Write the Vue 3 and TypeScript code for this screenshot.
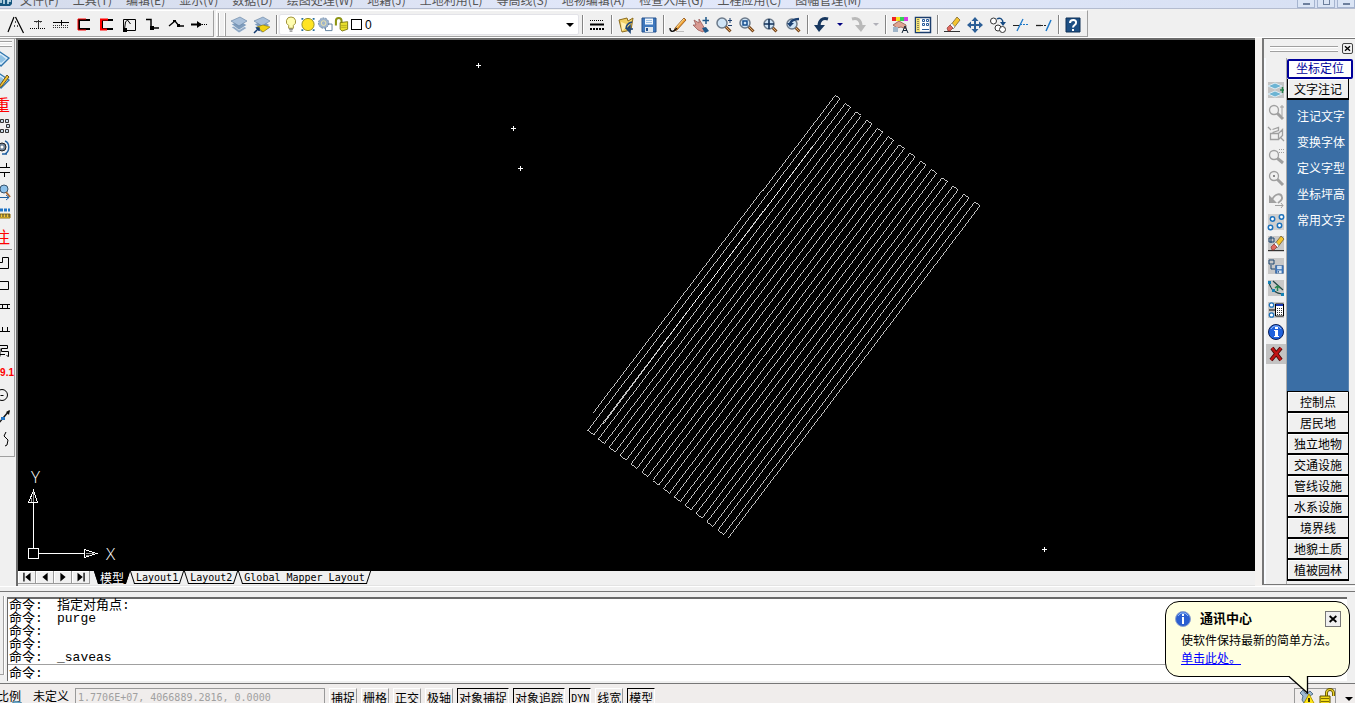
<script setup lang="ts">
interface Tool { id: string; label: string }

const menus: string[] = ['文件(F)', '工具(T)', '编辑(E)', '显示(V)', '数据(D)', '绘图处理(W)', '地籍(J)', '土地利用(L)', '等高线(S)', '地物编辑(A)', '检查入库(G)', '工程应用(C)', '图幅管理(M)']

const lens = (x: number, y: number) =>
  `<path d="M${x + 3} ${y + 3}L14.5 14.5" stroke="#7a4a20" stroke-width="3"/><path d="M${x + 3} ${y + 3}L14 14" stroke="#e0a868" stroke-width="1"/><circle cx="${x}" cy="${y}" r="5" fill="#cfe4f6" stroke="#6c7a8a" stroke-width="1.5"/>`
const grayLens = (x: number, y: number) =>
  `<path d="M${x + 3} ${y + 3}L15 15" stroke="#a0a0a0" stroke-width="3"/><circle cx="${x}" cy="${y}" r="4.5" fill="#f0f0f0" stroke="#a0a0a0" stroke-width="1.3"/>`
const sheets = `<path d="M0 10l9-3 7 4-8 5z" fill="#8fa8c4" stroke="#fff" stroke-width=".6"/><path d="M0 7l9-3 7 4-8 5z" fill="#7f9dbd" stroke="#fff" stroke-width=".6"/><path d="M0 4l9-4 7 4-8 5z" fill="#a9c0da" stroke="#5f7d9f" stroke-width=".6"/>`
const disk = `<path d="M1 1h14v14H1z" fill="#3f78bd" stroke="#24508c"/><path d="M4 1.500h8v6H4z" fill="#eef5fc"/><path d="M5 3.500h6M5 5.500h6" stroke="#9cc0e4"/><path d="M4 10h8v5H4z" fill="#dfe8f0"/><path d="M5 11h2v3H5z" fill="#24508c"/>`
const eraser = `<path d="M0 14.500h16" stroke="#333"/><path d="M6 9l7-9 3 3-7 9z" fill="#f4c430" stroke="#6a5320" stroke-width=".7"/><path d="M6 8l3 4 2-2-3-4z" fill="#f4f8fc" stroke="#567" stroke-width=".5"/><path d="M3 11l3-3 3 3-3 3H4z" fill="#e06a60" stroke="#7c2a25" stroke-width=".6"/>`
const pencil = `<path d="M5 11l9-10 2 2-9 10-3 1z" fill="#f0a030" stroke="#8a4a10" stroke-width=".8"/><path d="M6 11l8-9" stroke="#fff0b0" stroke-width=".8"/>`
const page = `<path d="M-2 6l8-6 9 6-8 8z" fill="#d9ecfa" stroke="#2f75ad" stroke-width="1.300"/><path d="M2 6l5-3 5 4-5 4z" fill="#8fc1e4"/>`

const icons: Record<string, string> = {
  angle: '<path d="M7 0L1 15M8.500 0l8 16" stroke="#000" stroke-width="1.200"/><path d="M8.500 4v2M7.500 8v2M10.500 8v2" stroke="#555"/>',
  liftLine: '<path d="M4 4.500h8M8.500 3v8M6.500 5.500l2-2 2 2" stroke="#333"/><path d="M0 11.500h16" stroke="#000" stroke-dasharray="1 1"/>',
  dotLine: '<path d="M0 5.500h16M8.500 3v5" stroke="#000"/><path d="M0 8.500h16M0 10.500h16" stroke="#333" stroke-dasharray="1 1"/>',
  redC: '<path d="M14 3H3v9h11" stroke="#000" stroke-width="2"/><path d="M10 2H2v11h8" stroke="#f00"/>',
  redC2: '<path d="M14 3H3v9h11" stroke="#000" stroke-width="2"/><path d="M9 2.500H2v10h6" stroke="#f00" stroke-width="2"/>',
  box: '<path d="M1.500 2.500h12v11h-12z" stroke="#000"/><path d="M2.500 12l1-7 2-2 3 4" stroke="#000"/><path d="M1 11h4v4H1z" fill="#000"/>',
  step: '<path d="M1 2.500h5v8.500h8" stroke="#000" stroke-width="1.500"/><path d="M5 9h4v4H5z" fill="#000"/>',
  poly: '<path d="M1 9l6-5 4 5h5" stroke="#000" stroke-width="1.300"/><path d="M5 3h3v2H5zM9 7h3v3H9z" fill="#000"/>',
  arrowLine: '<path d="M0 7.500h10" stroke="#000" stroke-width="2"/><path d="M9 7.500h7" stroke="#000" stroke-dasharray="1 1"/><path d="M6 4l5 3.500L6 11z" fill="#000"/>',
  layers: sheets,
  layersOut: sheets + '<path d="M3 10l6-2 7 2-7 5z" fill="#f1d20f" stroke="#8d7600" stroke-width=".6"/><path d="M0 16l5-5M2 11h3v3" stroke="#123a70" stroke-width="1.500"/>',
  bulb: '<path d="M8 0a4.800 4.800 0 0 0-2.500 9v3h5V9A4.800 4.800 0 0 0 8 0z" fill="#fffdb0" stroke="#9a8c30"/><path d="M6 13h4M6.500 15h3" stroke="#555"/>',
  sun: '<path d="M1 1h2v2H1zM13 1h2v2h-2zM1 13h2v2H1zM13 13h2v2h-2z" fill="#2a6f9c"/><circle cx="8" cy="8" r="6.500" fill="#ffe423" stroke="#8f8a20"/>',
  freeze: '<path d="M8.500 7.500h7v7h-7z" fill="#fff" stroke="#5d7d9b"/><circle cx="6.500" cy="6.500" r="5.500" fill="#9fb4cc" stroke="#6b88a8" stroke-dasharray="2 1"/><circle cx="6.500" cy="6.500" r="2.500" stroke="#f2e6a5"/>',
  unlock: '<path d="M1.500 9V4a3 3 0 0 1 6 0v4" stroke="#8d9414" stroke-width="2.200"/><path d="M6 6l8-1v8l-6 2-2-2z" fill="#e9df2e" stroke="#7e7a12"/><path d="M7 9h6M7 11h6" stroke="#b9b01e"/>',
  weights: '<path d="M1 3.500h14" stroke="#000" stroke-dasharray="1 1"/><path d="M1 7.500h14" stroke="#000" stroke-width="2"/><path d="M1 12h14" stroke="#000" stroke-width="2" stroke-dasharray="2 1"/>',
  folder: '<path d="M1 3l8-2 1 3 5-3-2 12-9 2z" fill="#f1cf63" stroke="#8c6b1d"/><path d="M3 5l8 3-7 6z" fill="#fff0b5"/><path d="M8 12c0-4 2-6 6-7M9 12l3-3v6zM9 12h6" stroke="#1e4679" stroke-width="1.600"/>',
  save: disk,
  pencil: pencil + '<path d="M0 11c0 4 3 4 5 2l2-2" stroke="#111" stroke-width="1.400"/><path d="M6 14.500h8" stroke="#bbb"/>',
  hand: '<path d="M1 3l5 3 0-4 3 5 3 5-2 3-5-2-5-5 3 0z" fill="#d99a92" stroke="#9a5c58" stroke-width=".8"/><path d="M9 11l4-1 3 4-4 2z" fill="#1f5788"/><path d="M13 0v7M9.500 3.500h6.500" stroke="#1f5788" stroke-width="1.500"/>',
  zoomRt: lens(6, 6) + '<path d="M12 3.500h4M14 1v5M12 8.500h4" stroke="#1c3f6e"/>',
  zoomWin: lens(6, 6) + '<path d="M4 4h4v4H4z" stroke="#174e8d" stroke-width="1.500"/>',
  zoomExt: lens(7, 7) + '<path d="M7 2v10M2 7h10" stroke="#102f58" stroke-width="1.600"/>',
  zoomPrev: lens(7, 7) + '<path d="M5 8c0-4 4-6 9-6" stroke="#1c4172" stroke-width="2.500"/><path d="M2 6h7l-4 4z" fill="#1c4172"/>',
  undo: '<path d="M14 2C8 0 5 4 5 9" stroke="#17375f" stroke-width="3"/><path d="M0 8h11l-6 7z" fill="#17375f"/>',
  redo: '<path d="M2 2c6-2 9 2 9 7" stroke="#b9b9b9" stroke-width="3"/><path d="M5 8h11l-5 7z" fill="#b9b9b9"/>',
  drop: '<path d="M5 6h6l-3 3z" fill="#000080"/>',
  dropOff: '<path d="M5 6h6l-3 3z" fill="#b0b0b8"/>',
  props: '<path d="M0 0h4v4H0z" fill="#e22"/><path d="M4 0h4v4H4z" fill="#f4e51d"/><path d="M8 0h4v4H8z" fill="#2fd255"/><path d="M12 0h4v4h-4z" fill="#d43be4"/><path d="M1 8l6-4 7 4v4l-5-2-4 1z" fill="#e0a592" stroke="#80483a" stroke-width=".7"/><path d="M1 10h5v5H1z" fill="#9fb5c9"/><path d="M10 16l3-7 3 7M11 13.500h4" stroke="#123"/>',
  palette: '<path d="M.5.500h15v15H.500z" fill="#fff" stroke="#1c3e6d" stroke-width="1.500"/><path d="M1 1h4v14H1z" fill="#f2e178"/><path d="M3 2v12" stroke="#333" stroke-dasharray="1 1"/><path d="M7.500 2.500h2v2h-2zM11.500 2.500h2v2h-2zM7.500 6.500h2v2h-2zM11.500 6.500h2v2h-2zM7 12.500h7" stroke="#285a9a"/>',
  eraser,
  move: '<path d="M8 1v14M1 8h14" stroke="#2c5f97" stroke-width="2"/><path d="M8 0l3.500 4h-7zM8 16l3.500-4h-7zM0 8l4-3.500v7zM16 8l-4-3.500v7z" fill="#2c5f97"/>',
  copy: '<circle cx="3.500" cy="4" r="3" fill="#fff" stroke="#333"/><circle cx="8" cy="11" r="3" fill="#fff" stroke="#333"/><circle cx="12.500" cy="12.500" r="3" fill="#fff" stroke="#333"/><path d="M7 2c3-2 6 0 6 4" stroke="#174b83" stroke-width="1.500"/><path d="M10 5h6l-3 4z" fill="#174b83"/>',
  trim: '<path d="M0 8.500h6" stroke="#222"/><path d="M10 2L4 14" stroke="#1c78c8" stroke-width="1.300"/><path d="M7 7.500h9" stroke="#1c78c8" stroke-dasharray="2 1"/>',
  extend: '<path d="M0 8.500h5" stroke="#222" stroke-width="1.300"/><path d="M5 8.500h6" stroke="#222" stroke-dasharray="2 1"/><path d="M15 3l-5 11" stroke="#1c78c8" stroke-width="1.500"/>',
  help: '<path d="M1 1h14v14H1z" fill="#1d4f84" stroke="#0f3157"/><path d="M5 6c0-4 7-4 6 0 0 2-3 2-3 4.500M8 12v2" stroke="#fff" stroke-width="2"/>',
  page,
  pageEdit: page + '<path d="M6 11L13 1l2 2-7 9-3 2z" fill="#f4c430" stroke="#6a5320"/>',
  squares: '<path d="M6.500 1.500h3v3h-3zM11.500 1.500h3v3h-3zM12.500 6.500h3v3h-3zM11.500 11.500h3v3h-3zM6.500 11.500h3v3h-3z" fill="#c9dbe9" stroke="#333"/>',
  rotate: '<circle cx="8" cy="7" r="4" fill="#6f8296" stroke="#222"/><circle cx="8" cy="7" r="1.500" fill="#fff"/><path d="M11 1c5 2 5 10 0 13M8 14h5" stroke="#1f5fa0" stroke-width="1.400"/>',
  tees: '<path d="M6 5.500h10M12.500 1v5M6 10.500h10M10.500 10v5" stroke="#000"/>',
  find: '<circle cx="10" cy="5" r="4" fill="#8dc1ea" stroke="#38536c"/><path d="M12 8l4 5" stroke="#a86834" stroke-width="2"/><path d="M5 13.500h10M12 11l3 2.500-3 2.500" stroke="#1f5fa0"/>',
  ruler: '<path d="M6 4h10" stroke="#1f73c4" stroke-width="3" stroke-dasharray="3 1"/><path d="M5 8h11v4H5z" fill="#f5c93a" stroke="#93700b"/><path d="M6 8v3M9 8v3M12 8v3M15 8v3" stroke="#333"/>',
  lShape: '<path d="M5 7.500h3.500v-5h6v11H5" stroke="#000"/>',
  rect: '<path d="M5 4.500h9.500v8H5" stroke="#000"/>',
  bridge: '<path d="M5 5.500h11M5 9.500h11M8.500 5v5M13.500 5v5" stroke="#000"/>',
  fence: '<path d="M5 10.500h11M8.500 6v5M13.500 6v5" stroke="#000"/>',
  bed: '<path d="M6 2.500h7.500v3H7.500v3h7v5l-2-1M6 5.500v8M5 11.500h6" stroke="#000"/>',
  circle: '<circle cx="8" cy="8" r="5.500" stroke="#000"/><path d="M6.500 8.500h3" stroke="#000"/>',
  diag: '<path d="M4 15L15 2" stroke="#111" stroke-width="1.400"/><path d="M16 1l-1 5-3-3z" fill="#111"/><path d="M7 8h4v3H7z" fill="#1f73c4"/>',
  curve: '<path d="M12 1l-2 4 4 4-1 5-2 1" stroke="#000"/>',
  diamond: '<path d="M0 0h16v16H0z" fill="#c4c4c4"/><path d="M0 4l7-3 7 3-7 3zM0 12l7-3 7 3-7 3z" fill="#6db4d3" stroke="#dcecf4"/><path d="M14.500 5v6M12 8h4" stroke="#26834c" stroke-width="1.500"/>',
  gZoomUp: grayLens(6, 6) + '<path d="M14 1v11M12 3h4" stroke="#a0a0a0"/>',
  gCube: '<path d="M4.500 6.500l6-2v-3l-6 2M2.500 7.500h8v6h-8zM10.500 7.500l4-4v6l-4 4M0 1l3 3M16 15l-3-3" stroke="#a0a0a0" stroke-width="1.300"/>',
  gZoomGrid: grayLens(6, 7) + '<path d="M11 1.500h5M11 4.500h5" stroke="#a0a0a0" stroke-dasharray="1 1"/>',
  gZoomDot: grayLens(6, 6) + '<path d="M5 5h2v2H5z" fill="#888"/>',
  gUndo: '<path d="M4 8C7 1 13 1 14 5c1 3-2 4-4 6" stroke="#a0a0a0" stroke-width="1.800"/><path d="M7 13.500h8M13 11l2 2.500-2 2.500" stroke="#a0a0a0"/><path d="M1 3v8h8z" fill="#a0a0a0"/>',
  nodes: '<path d="M0 0h16v16H0z" fill="#cfcfcf"/><g fill="#fff" stroke="#1c72bd" stroke-width="1.500"><circle cx="4.500" cy="5" r="2.200"/><circle cx="13.500" cy="3" r="2.200"/><circle cx="11.500" cy="11.500" r="2.200"/><circle cx="2.500" cy="13.500" r="2.200"/></g>',
  eraseBox: '<path d="M0 0h16v16H0z" fill="#c8c8c8"/><path d="M1 2h5v4H1zM3 0v7" stroke="#1f4872"/>' + eraser,
  saveBox: '<path d="M0 0h16v16H0z" fill="#c8c8c8"/><path d="M1 2h5v4H1zM3 7v4h4" stroke="#1f4872"/><g transform="translate(7 7) scale(.55)">' + disk + '</g>',
  arc: '<path d="M0 0h16v16H0z" fill="#c8c8c8"/><path d="M1 2c1 7 6 11 13 12M5 1l10 9" stroke="#244" stroke-width="1.200"/><path d="M0 1h3v3H0zM4 9h3v3H4zM13 13h3v3h-3z" fill="#1582b5"/><path d="M9.500 11V6M7 8l2.500-2L12 8" stroke="#26834c" stroke-width="1.500"/>',
  table: '<path d="M0 0h16v16H0z" fill="#c8c8c8"/><g fill="#fff" stroke="#1c72bd" stroke-width="1.300"><circle cx="3.500" cy="3" r="2.200"/><circle cx="3.500" cy="13" r="2.200"/></g><path d="M1 8h6" stroke="#000"/><path d="M7.500 2h8v12h-8z" fill="#fff" stroke="#000"/><path d="M8 3h7" stroke="#1738b0" stroke-width="2"/><path d="M9 6.500h5M9 8.500h5M9 10.500h5M9 12.500h5" stroke="#333" stroke-dasharray="1 1"/>',
  info: '<circle cx="8" cy="8" r="7.500" fill="#1f61dd" stroke="#091e58"/><path d="M3 5c2-4 8-4 10 0" stroke="#9cc4ff"/><path d="M7 3h3v2H7zM6 6h4v6h1v1H6v-1h1V7H6z" fill="#fff"/>',
  notice: '<circle cx="8" cy="8" r="7.500" fill="#2c5fd0" stroke="#8fa4cf"/><path d="M3 5c2-4 8-4 10 0" stroke="#9cc4ff"/><path d="M7 3h2v2H7zM7 6h2v7H7z" fill="#fff"/>',
  delete: '<path d="M4 2l9 12M13 2L3 14" stroke="#4b0909" stroke-width="4"/><path d="M4 2l9 12M13 2L3 14" stroke="#c21414" stroke-width="2.300"/>',
  first: '<path d="M4.500 3v10" stroke="#000" stroke-width="1.500"/><path d="M12 3v10L6 8z" fill="#000"/>',
  prev: '<path d="M11 3v10L5 8z" fill="#000"/>',
  next: '<path d="M5 3v10l6-5z" fill="#000"/>',
  last: '<path d="M11.500 3v10" stroke="#000" stroke-width="1.500"/><path d="M4 3v10l6-5z" fill="#000"/>',
  close: '<path d="M3.500 4l9 8M12.500 4l-9 8" stroke="#000" stroke-width="2.400"/>',
  satellite: '<path d="M1 4l3-3 3 4 4-3 3 3-5 3-4 6-2-3 1-4z" fill="#9db8d0" stroke="#52708c"/><path d="M10 5l6 11H4z" fill="#ffe51c" stroke="#b79b00"/><path d="M10 9v4M10 14v1.500" stroke="#000" stroke-width="1.500"/>',
  gold: '<path d="M7.500 7V4a3 3 0 0 1 7 0v3" stroke="#665600" stroke-width="3"/><path d="M7.500 7V4a3 3 0 0 1 7 0v3" stroke="#ead32a" stroke-width="1.200"/><path d="M1 7h10v9H1z" fill="#f2da18" stroke="#5f5100"/><path d="M2 9.500h8M2 12.500h8" stroke="#806e00"/>'
}

const t = (id: string, label: string): Tool => ({ id, label })
const drawTools = [t('angle', '夹角'), t('liftLine', '上移线'), t('dotLine', '平行线'), t('redC', '左开口'), t('redC2', '右开口'), t('box', '矩形'), t('step', '折角'), t('poly', '折线'), t('arrowLine', '方向线')]
const layerTools = [t('layers', '图层'), t('layersOut', '上一图层')]
const mainTools = [t('folder', '打开'), t('save', '保存'), t('', ''), t('pencil', '重画'), t('hand', '平移'), t('zoomRt', '实时缩放'), t('zoomWin', '窗口缩放'), t('zoomExt', '全图'), t('zoomPrev', '前图'), t('', ''), t('undo', '撤销'), t('drop', '撤销列表'), t('redo', '重做'), t('dropOff', '重做列表'), t('', ''), t('props', '特性'), t('palette', '工具选项板'), t('', ''), t('eraser', '删除'), t('move', '移动'), t('copy', '复制'), t('trim', '修剪'), t('extend', '延伸'), t('', ''), t('help', '帮助')]
const leftTools = [t('page', '查看'), t('pageEdit', '编辑'), t('text:重', '重'), t('squares', '阵列'), t('rotate', '旋转'), t('tees', '线型'), t('find', '查找'), t('ruler', '量尺'), t('text:注', '注'), t('', ''), t('lShape', '多点房屋'), t('rect', '四点房屋'), t('bridge', '桥'), t('fence', '围墙'), t('bed', '坎'), t('text:9.1', '9.1'), t('circle', '圆'), t('diag', '直线'), t('curve', '曲线')]
const rightTools = [t('diamond', '图层切换'), t('gZoomUp', '放大'), t('gCube', '视图'), t('gZoomGrid', '网格'), t('gZoomDot', '中心'), t('gUndo', '返回'), t('nodes', '节点'), t('eraseBox', '清除'), t('saveBox', '存盘'), t('arc', '圆弧'), t('table', '属性表'), t('info', '信息'), t('delete', '取消')]
const noteItems = ['注记文字', '变换字体', '定义字型', '坐标坪高', '常用文字']
const categories = ['控制点', '居民地', '独立地物', '交通设施', '管线设施', '水系设施', '境界线', '地貌土质', '植被园林']
const navs = [t('first', '第一页'), t('prev', '上一页'), t('next', '下一页'), t('last', '最后页')]
const tabs = ['模型', 'Layout1', 'Layout2', 'Global Mapper Layout']
const history = ['指定对角点:', 'purge', '', '', '_saveas']
const modes = [
  { label: '捕捉', on: false }, { label: '栅格', on: false }, { label: '正交', on: false }, { label: '极轴', on: false },
  { label: '对象捕捉', on: true }, { label: '对象追踪', on: true }, { label: 'DYN', on: true }, { label: '线宽', on: false }, { label: '模型', on: true }
]
const crosses = [[478, 65], [513, 128], [520, 168], [1044, 549]]

// Serpentine flight line: 14 upper turns and 13 lower turns.
const route: string[] = ['593.5,412.5']
for (let i = 0; i < 14; i++) {
  const tx = 834.5 + i * 10.77
  const ty = 95.5 + i * 8.23
  route.push(`${tx},${ty}`, `${tx + 5.3},${ty + 3.6}`)
  if (i < 13) {
    const bx = 587.5 + i * 10.86
    const by = 430.8 + i * 8.28
    route.push(`${bx},${by}`, `${bx + 6},${by + 4.5}`)
  }
}
route.push('728.5,537.5')
const routePoints = route.join(' ')
</script>

<template>
  <div class="app">
    <header class="menubar">
      <svg class="logo" viewBox="0 0 13 8" aria-hidden="true"><path d="M0 0h12v4l-2 2H0z" fill="#15567f" /><path d="M1 0v3M4 0v4M8 0v4M8 1h3" stroke="#d7eef8" stroke-width="1.5" /></svg>
      <nav><a v-for="m in menus" :key="m" href="#">{{ m }}</a></nav>
      <div class="winbtns"><button aria-label="最小化"><i class="min"></i></button><button aria-label="还原"><i class="max"></i></button><button aria-label="关闭"><i class="min"></i></button></div>
    </header>

    <div class="toolbars">
      <div class="bar first">
        <button v-for="b in drawTools" :key="b.id" class="tool" :aria-label="b.label"><svg viewBox="0 0 16 16" v-html="icons[b.id]"></svg></button>
      </div>
      <div class="bar second">
        <span class="grip"></span>
        <button v-for="b in layerTools" :key="b.id" class="tool" :aria-label="b.label"><svg viewBox="0 0 16 16" v-html="icons[b.id]"></svg></button>
        <span class="sep"></span>
        <div class="layer">
          <svg v-for="n in ['bulb', 'sun', 'freeze', 'unlock']" :key="n" viewBox="0 0 16 16" v-html="icons[n]"></svg>
          <i class="swatch"></i>
          <select aria-label="当前图层"><option>0</option></select>
          <i class="caret"></i>
        </div>
        <span class="sep"></span>
        <button class="tool" aria-label="线宽"><svg viewBox="0 0 16 16" v-html="icons.weights"></svg></button>
        <span class="sep"></span>
        <template v-for="(b, i) in mainTools" :key="i">
          <span v-if="!b.id" class="sep"></span>
          <button v-else class="tool" :class="{ narrow: b.id.startsWith('drop') }" :aria-label="b.label"><svg viewBox="0 0 16 16" v-html="icons[b.id]"></svg></button>
        </template>
      </div>
    </div>

    <div class="main">
      <aside class="left">
        <div class="leftbar">
          <span class="hgrip"></span>
          <template v-for="(b, i) in leftTools" :key="i">
            <span v-if="!b.id" class="hsep"></span>
            <button v-else class="ltool" :aria-label="b.label">
              <span v-if="b.id.startsWith('text:')" class="red" :class="{ num: b.label === '9.1' }">{{ b.label }}</span>
              <svg v-else viewBox="0 0 16 16" v-html="icons[b.id]"></svg>
            </button>
          </template>
        </div>
      </aside>

      <main class="drawing">
        <div class="canvas">
          <svg viewBox="18 40 1237 531" preserveAspectRatio="xMinYMin meet" fill="none" stroke="#fff" shape-rendering="crispEdges">
            <g stroke-width="0.75">
              <polyline :points="routePoints" />
              <path d="M812.500 145.500L603.500 423.500" />
            </g>
            <path v-for="c in crosses" :key="c[0]" :d="`M${c[0] - 2} ${c[1] + 0.5}h5M${c[0] + 0.5} ${c[1] - 2}v5`" />
            <path d="M28.500 548.500h10v10h-10zM33.500 548V502M39 553.500h45M28.500 502.500h9l-4-12zM84.500 549.500v8l12-4z" />
            <path d="M33.500 492v10M31.500 498v4M86 553.500h8M86 555.500h4" stroke="#999" />
            <text x="31" y="483" class="axis">Y</text>
            <text x="106" y="560" class="axis">X</text>
          </svg>
        </div>
        <div class="tabs">
          <button v-for="n in navs" :key="n.id" class="nav" :aria-label="n.label"><svg viewBox="0 0 16 16" v-html="icons[n.id]"></svg></button>
          <div class="sheets"><button v-for="(s, i) in tabs" :key="s" class="sheet" :class="{ active: i === 0 }">{{ s }}</button></div>
        </div>
      </main>

      <aside class="right">
        <div class="dockhead"><span class="dockgrip"></span><button class="x" aria-label="关闭面板"><svg viewBox="0 0 16 16" v-html="icons.close"></svg></button></div>
        <div class="dock">
          <div class="rtools">
            <button v-for="b in rightTools" :key="b.id" :class="{ held: b.id === 'delete' }" :aria-label="b.label"><svg viewBox="0 0 16 16" v-html="icons[b.id]"></svg></button>
          </div>
          <div class="screenmenu">
            <button class="locate">坐标定位</button>
            <button class="cat">文字注记</button>
            <div class="notes"><a v-for="n in noteItems" :key="n" href="#">{{ n }}</a></div>
            <button v-for="c in categories" :key="c" class="cat">{{ c }}</button>
          </div>
        </div>
      </aside>
    </div>

    <section class="command">
      <span class="cmdgrip"></span>
      <div class="cmdbox">
        <div class="history"><p v-for="(h, i) in history" :key="i"><span class="prompt">命令:</span>{{ h }}</p></div>
        <div class="entry"><label for="cmd" class="prompt">命令:</label><input id="cmd" type="text" /></div>
      </div>
    </section>

    <footer class="status">
      <span class="scale">比例</span><span class="undef">未定义</span>
      <output class="coords">1.7706E+07, 4066889.2816, 0.0000</output>
      <button v-for="(m, i) in modes" :key="i" class="mode" :class="{ on: m.on, latin: m.label === 'DYN' }">{{ m.label }}</button>
      <div class="tray">
        <div class="traybox"><svg viewBox="0 0 16 16" v-html="icons.satellite"></svg><svg viewBox="0 0 16 16" v-html="icons.gold"></svg></div>
        <i class="caret"></i>
      </div>
      <svg class="orb" viewBox="0 0 20 3" aria-hidden="true"><ellipse cx="10" cy="8" rx="10" ry="7.500" fill="#69a7c9" stroke="#356f92" /></svg>
    </footer>

    <section class="balloon" role="dialog" aria-label="通讯中心">
      <header><svg viewBox="0 0 16 16" v-html="icons.notice"></svg><h2>通讯中心</h2><button aria-label="关闭"><svg viewBox="0 0 16 16" v-html="icons.close"></svg></button></header>
      <p>使软件保持最新的简单方法。</p>
      <a href="#">单击此处。</a>
      <svg class="tail" viewBox="0 0 20 19" aria-hidden="true"><path d="M0 0v1l18 17V0z" fill="#ffffe1" /><path d="M0 1.500l18.500 16.500V1" fill="none" stroke="#000" stroke-width="1.300" /></svg>
    </section>
  </div>
</template>

<style>
html, body { margin: 0; overflow: hidden; }
</style>

<style scoped>
.app { position: relative; display: flex; flex-direction: column; height: 100vh; overflow: hidden; background: #f0f0f0; color: #000; font: 12px/16px "Liberation Sans", "Noto Sans CJK SC", sans-serif; }
.app *, .app *::before, .app *::after { box-sizing: border-box; }
button { margin: 0; padding: 0; border: 0; background: none; color: inherit; font: inherit; white-space: nowrap; }
svg { display: block; flex: none; width: 16px; height: 16px; fill: none; overflow: visible; }
p, h2 { margin: 0; }

.menubar { display: flex; align-items: flex-end; flex: none; height: 9px; overflow: hidden; background: linear-gradient(90deg, #d5dcec, #e2e8fa 50%, #d7e0f3); border-bottom: 1px solid #b4bccf; }
.logo { width: 13px; height: 8px; align-self: flex-start; }
.menubar nav { display: flex; gap: 14px; margin-left: 7px; }
.menubar a { color: #555; text-decoration: none; line-height: 16px; font-family: "Noto Sans CJK SC", sans-serif; white-space: nowrap; }
.winbtns { display: flex; align-self: flex-start; gap: 2px; margin-left: auto; }
.winbtns button { display: flex; justify-content: center; width: 18px; height: 8px; border: 1px solid #a5b4cf; border-top: 0; background: #dbe5f5; }
.winbtns i { width: 7px; height: 5px; border: 1px solid #6d7f9c; border-top: 0; }
.winbtns .min { height: 5px; border-width: 0 0 2px; }

.toolbars { display: flex; flex: none; height: 29px; padding-top: 1px; border-bottom: 1px solid #fff; }
.bar { display: flex; align-items: center; height: 27px; border: solid #a0a0a0; border-width: 1px 1px 1px 0; border-top-color: #fff; }
.first { padding: 2px 3px 0; }
.second { margin-left: 2px; padding: 2px 3px 0 0; border-left: 1px solid #fff; }
.grip { width: 8px; height: 23px; margin: 0 1px; border: solid #a0a0a0; border-width: 0 1px; box-shadow: inset 1px 0 #fff, inset -1px 0 #fff; }
.tool { display: flex; align-items: center; justify-content: center; flex: none; width: 23px; height: 23px; }
.narrow { width: 13px; }
.sep { flex: none; width: 6px; height: 19px; background: linear-gradient(90deg, transparent 3px, #858585 3px, #858585 4px, #fff 4px, #fff 5px, transparent 5px); }
.layer { display: flex; align-items: center; gap: 1px; width: 300px; height: 21px; padding: 0 4px 0 3px; border: 1px solid #e3e3e8; border-radius: 2px; background: #fff; }
.layer svg { height: 15px; }
.swatch { flex: none; width: 11px; height: 11px; border: 1px solid #000; }
select { flex: 1; min-width: 0; height: 18px; padding: 0 2px; border: 0; appearance: none; background: transparent; color: #000; font: inherit; }
.caret { flex: none; width: 0; height: 0; border: 4px solid transparent; border-top-color: #000; border-bottom: 0; }

.main { display: flex; flex: 1; min-height: 0; }
.left { flex: none; width: 16px; overflow: hidden; border-top: 1px solid #a0a0a0; }
.leftbar { display: flex; flex-direction: column; width: 15px; padding-bottom: 6px; border: solid #a0a0a0; border-width: 0 1px 1px 0; }
.hgrip { flex: none; height: 6px; margin: 2px 2px 2px 0; border: solid #a0a0a0; border-width: 1px 0; box-shadow: inset 0 1px #fff, inset 0 -1px #fff; }
.hsep { flex: none; height: 1px; margin: 2px 2px 2px 0; background: #8c8c8c; }
.ltool { display: flex; align-items: center; justify-content: flex-end; flex: none; height: 22px; padding-right: 4px; }
.red { color: #f00; font: 16px/20px "Noto Sans CJK SC", sans-serif; }
.red.num { margin-right: -4px; font: 700 10px/22px "Liberation Sans", sans-serif; }

.drawing { display: flex; flex: 1; flex-direction: column; min-width: 0; border: solid #6b6b6b; border-width: 2px 0 0 2px; }
.canvas { flex: 1; min-height: 0; overflow: hidden; background: #000; }
.canvas svg { width: 100%; height: 100%; }
.axis { fill: #fff; stroke: none; font: 300 17px "Open Sans", sans-serif; }
.tabs { display: flex; flex: none; height: 15px; padding-bottom: 1px; border-bottom: 1px solid #e3e3e3; background: #f0f0f0; }
.nav { display: flex; align-items: center; justify-content: center; width: 18px; height: 13px; border: solid #9a9a9a; border-width: 0 1px 1px 0; box-shadow: inset 1px 1px #fff; }
.nav svg { width: 14px; height: 14px; }
.sheets { display: flex; height: 14px; margin-left: 4px; isolation: isolate; }
.sheet { position: relative; height: 13px; padding: 0 6px; font: 10px/13px "DejaVu Sans Mono", "Noto Sans CJK SC", monospace; }
.sheet::before, .sheet::after { content: ""; position: absolute; z-index: -1; top: 0; bottom: 0; border-bottom: 1px solid #000; background: #f0f0f0; }
.sheet::before { left: 2px; right: 50%; border-left: 1px solid #000; transform: skewX(18deg); }
.sheet::after { left: 50%; right: 2px; border-right: 1px solid #000; transform: skewX(-18deg); }
.sheet.active { color: #fff; font: 12px/12px "Noto Sans CJK SC", sans-serif; }
.sheet.active::before { right: 30%; background: #000; }
.sheet.active::after { left: 30%; background: #000; }

.right { display: flex; flex: none; flex-direction: column; width: 100px; padding-bottom: 1px; border-left: 7px solid #f4f2f0; }
.dockhead { display: flex; align-items: center; flex: none; height: 20px; padding: 0 2px 0 6px; border: solid #777; border-width: 1px 0 0 2px; }
.dockgrip { flex: 1; height: 6px; margin-right: 4px; border: solid #a0a0a0; border-width: 1px 0; box-shadow: inset 0 1px #fff, inset 0 -1px #fff; }
.x { display: flex; align-items: center; justify-content: center; width: 11px; height: 11px; border: 1px solid #444; border-radius: 2px; }
.x svg { width: 9px; height: 9px; }
.dock { display: flex; flex: 1; min-height: 0; border: solid #777; border-width: 0 0 1px 2px; box-shadow: inset 2px 0 #f8fbff; }
.rtools { display: flex; flex-direction: column; flex: none; width: 23px; padding-top: 21px; padding-left: 2px; border-right: 1px solid #aaa; }
.rtools button { display: flex; align-items: center; justify-content: center; flex: none; width: 20px; height: 22px; }
.rtools .held { height: 20px; margin-top: 1px; background: #c3c3c3; }
.screenmenu { display: flex; flex-direction: column; flex: 1; padding: 1px 6px 3px 0; }
.locate { flex: none; align-self: flex-start; width: 66px; height: 20px; margin-right: -4px; border: 2px solid #00009a; border-radius: 2px; background: #fff; color: #00009a; line-height: 16px; }
.cat { flex: none; height: 21px; padding-top: 3px; border: solid #000; border-width: 0 1px 2px; background: #f0f0f0; box-shadow: inset 1px 1px #fff; line-height: 16px; }
.notes { display: flex; flex: 1; flex-direction: column; padding: 4px 0 0 10px; border-right: 1px solid #5c86b1; border-bottom: 1px solid #000; background: #3a6ea5; }
.notes a { color: #fff; line-height: 26px; text-decoration: none; white-space: nowrap; }

.command { display: flex; flex: none; height: 97px; padding-top: 6px; border-top: 1px solid #fff; box-shadow: inset 0 4px #f0f0f0, inset 0 5px #777; }
.cmdgrip { flex: none; width: 4px; margin: 3px 3px 8px 0; border: 1px solid #a0a0a0; border-width: 0 1px 1px 0; box-shadow: 1px 0 #fff; }
.cmdbox { display: flex; flex: 1; flex-direction: column; margin: 4px 8px 2px 0; border: solid #696969; border-width: 2px 0 0 1px; background: #fff; font: 13px/13px "Liberation Mono", "Noto Sans CJK SC", monospace; }
.history { flex: none; height: 66px; padding-left: 1px; border-bottom: 1px solid #a0a0a0; }
.history p { display: flex; height: 13px; white-space: pre; }
.prompt { flex: none; width: 48px; }
.entry { display: flex; align-items: center; flex: 1; padding-left: 1px; }
.entry input { flex: 1; min-width: 0; height: 15px; padding: 0; border: 0; outline: 0; background: transparent; font: inherit; }

.status { position: relative; display: flex; align-items: flex-start; flex: none; height: 20px; padding-top: 4px; overflow: hidden; border-top: 1px solid #777; background: #f0edec; line-height: 18px; white-space: nowrap; }
.scale { margin-left: -3px; }
.undef { margin: 0 6px 0 12px; }
.coords { width: 250px; height: 20px; margin-right: 4px; padding-left: 2px; border: solid #999; border-width: 1px 1px 0 1px; color: #a0a0a0; font: 10px/17px "DejaVu Sans Mono", monospace; }
.mode { height: 20px; margin-right: 4px; padding: 0 1px; border: solid; border-width: 1px 1px 0 1px; border-color: #fff #999 #fff #fff; line-height: 16px; }
.mode.on { border-color: #000 #fff #fff #000; }
.mode.latin { font: 10px/17px "DejaVu Sans Mono", monospace; }
.tray { display: flex; align-items: center; gap: 9px; height: 22px; margin-left: auto; margin-right: 2px; }
.traybox { display: flex; gap: 4px; height: 22px; padding: 0 0 0 4px; border: solid #999; border-width: 1px 1px 0 1px; }
.orb { position: absolute; left: 9px; bottom: 0; width: 16px; height: 2px; overflow: hidden; }

.balloon { position: absolute; right: 5px; bottom: 26px; display: flex; flex-direction: column; align-items: flex-start; width: 185px; height: 76px; padding: 9px 8px 7px 9px; border: 1px solid #000; border-radius: 14px; background: #ffffe1; }
.balloon header { display: flex; align-items: center; align-self: stretch; height: 16px; }
.balloon h2 { flex: 1; margin-left: 9px; font-size: 13px; line-height: 16px; }
.balloon header button { display: flex; align-items: center; justify-content: center; width: 16px; height: 16px; border: 1px solid #777; background: #f0f0f0; }
.balloon header button svg { width: 12px; height: 12px; }
.balloon p { margin: 5px 0 0 6px; line-height: 18px; white-space: nowrap; }
.balloon a { margin-left: 6px; color: #00f; line-height: 18px; }
.tail { position: absolute; left: 123px; top: 73px; width: 20px; height: 19px; }
</style>
